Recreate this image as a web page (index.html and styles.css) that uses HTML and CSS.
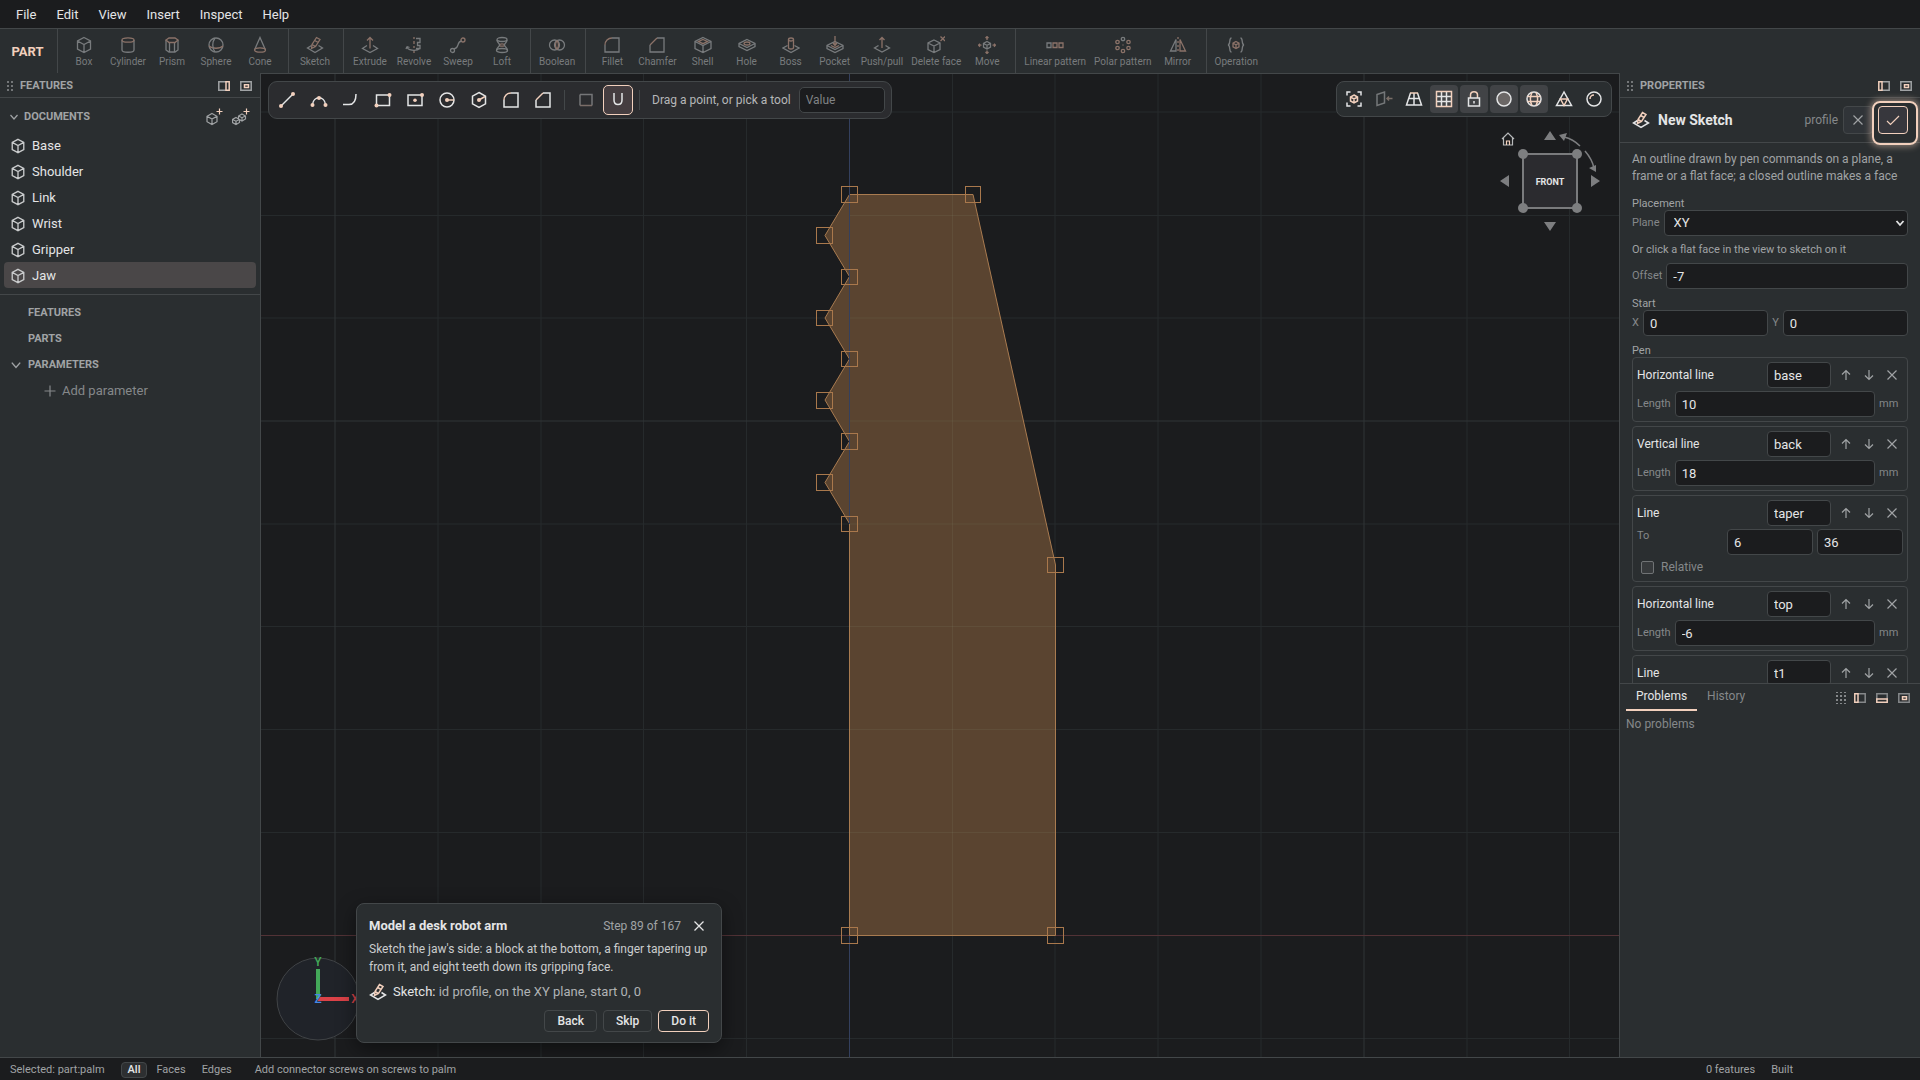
FILE: index.html
```html
<!DOCTYPE html>
<html lang="en">
<head>
<meta charset="utf-8">
<title>Jaw - Part</title>
<link rel="stylesheet" href="styles.css">
</head>
<body>
<svg class="defs" aria-hidden="true">
  <symbol id="box" viewBox="0 0 18 18"><path d="M9 1.500 15.500 5v8L9 16.500 2.500 13V5zM2.500 5 9 8.500 15.500 5M9 8.500V16.500"/></symbol>
  <symbol id="cylinder" viewBox="0 0 18 18"><path d="M3 4v10c0 3 12 3 12 0V4"/><ellipse class="hi" cx="9" cy="4" rx="6" ry="2.200"/></symbol>
  <symbol id="prism" viewBox="0 0 18 18"><path d="M3 4v10l3 2h6l3-2V4M6.500 6.500V16M11.500 6.500V16"/><path class="hi" d="M3 4l3-2h6l3 2-3 2.500H6z"/></symbol>
  <symbol id="sphere" viewBox="0 0 18 18"><circle cx="9" cy="9" r="7"/><path class="hi" d="M2 10c3 3 11 3 14 0"/><path d="M8 2c-3 4-3 10 0 14"/></symbol>
  <symbol id="cone" viewBox="0 0 18 18"><path d="M3.500 14 9 1.500 14.500 14"/><ellipse class="hi" cx="9" cy="14" rx="5.500" ry="2.200"/></symbol>
  <symbol id="sketch" viewBox="0 0 18 18"><path d="M5.500 9.500 1.500 12 9 16.500l7.500-4.500-4-2.500"/><path class="hi" d="M5.500 12.500 6 8.500 10.500 1.500l3.500 2-4.500 7zM6 8.500l3.500 2M8.700 4.500l3.500 2"/></symbol>
  <symbol id="extrude" viewBox="0 0 18 18"><path d="M6 9.500 1.500 12.500 9 16.500l7.500-4L12 9.500"/><path class="hi" d="M9 12.500V1.500M6 4.500l3-3 3 3"/></symbol>
  <symbol id="revolve" viewBox="0 0 18 18"><path class="hi" d="M9 1v2M9 5v3M9 10v2M9 14v3"/><path d="M11 2.500h4v4h-2.500v3H15v3h-4M2 10.500c0 4 9 5 13 2M2 10.500l-1 2.500M2 10.500l2.500 1"/></symbol>
  <symbol id="sweep" viewBox="0 0 18 18"><circle cx="3.500" cy="14.500" r="2"/><circle class="hi" cx="14" cy="4" r="2"/><path d="M5 13c6-1 2-7 7.500-8"/></symbol>
  <symbol id="loft" viewBox="0 0 18 18"><ellipse cx="9" cy="3.500" rx="5" ry="2"/><ellipse class="hi" cx="9" cy="9" rx="2.500" ry="1.200"/><path d="M4 4c0 3 2.500 3 2.500 5S3.500 11 3.500 14.500M14 4c0 3-2.500 3-2.500 5s3 2 3 5.500"/><ellipse cx="9" cy="14.500" rx="5.500" ry="2"/></symbol>
  <symbol id="boolean" viewBox="0 0 18 18"><circle cx="6.500" cy="9" r="5"/><circle cx="11.500" cy="9" r="5"/><path class="hi" d="M9 4.800c-2 2-2 6.400 0 8.400 2-2 2-6.400 0-8.400z"/></symbol>
  <symbol id="fillet" viewBox="0 0 18 18"><path d="M9 2h7v14H2V9"/><path class="hi" d="M2 9c0-4 3-7 7-7"/></symbol>
  <symbol id="chamfer" viewBox="0 0 18 18"><path d="M9 2h7v14H2V9"/><path class="hi" d="m2 9 7-7"/></symbol>
  <symbol id="shell" viewBox="0 0 18 18"><path d="M9 1.500 17 5.500v7L9 16.500l-8-4v-7zM1 5.500l8 4 8-4M9 9.500v7"/><path class="hi" d="m9 3.500 4.500 2L9 7.700 4.500 5.500z"/></symbol>
  <symbol id="hole" viewBox="0 0 18 18"><path d="m9 3.500 8 4v3l-8 4-8-4v-3zM1 7.500l8 4 8-4"/><ellipse class="hi" cx="9" cy="7.500" rx="3" ry="1.500"/></symbol>
  <symbol id="boss" viewBox="0 0 18 18"><path d="M5.500 9.500 1 12l8 4.500 8-4.500-4.500-2.500"/><path class="hi" d="M6.500 3.500v8c0 2 5 2 5 0v-8"/><ellipse class="hi" cx="9" cy="3.500" rx="2.500" ry="1.500"/></symbol>
  <symbol id="pocket" viewBox="0 0 18 18"><path d="m9 5.500 8 4v3l-8 4-8-4v-3zM1 9.500l8 4 8-4"/><path class="hi" d="M9 0v9M7 7l2 2.500L11 7M5 9.500l4 2 4-2"/></symbol>
  <symbol id="pushpull" viewBox="0 0 18 18"><path d="M5.500 9.500 1.500 12 9 16l7.500-4-4-2.500"/><path class="hi" d="M9 12V1.500M6.500 4 9 1.500 11.500 4"/></symbol>
  <symbol id="delface" viewBox="0 0 18 18"><path d="m7 4 6 3v6.500l-6 3-6-3V7zM1 7l6 3 6-3M7 10v6.500"/><path class="hi" d="m13.500.5 4.500 4.500M18 .5 13.500 5"/></symbol>
  <symbol id="move" viewBox="0 0 18 18"><path d="m9 5.500 3.500 2v3.500L9 13l-3.500-2V7.500zM5.500 7.500 9 9.300l3.500-1.800M9 9.300V13"/><path class="hi" d="M9 4V.8M7.500 2 9 .6 10.500 2M9 14.500v3M7.500 16 9 17.500l1.500-1.500M3.500 9.200H.6M2 7.700.5 9.200 2 10.700M14.500 9.200h3M16 7.700l1.500 1.500-1.500 1.500"/></symbol>
  <symbol id="linear" viewBox="0 0 18 18"><path d="M1 7h4v4.500H1z"/><path class="hi" d="M7 7h4v4.500H7zM13 7h4v4.500h-4z"/></symbol>
  <symbol id="polar" viewBox="0 0 18 18"><circle cx="9" cy="3" r="1.700"/><g class="hi"><circle cx="14.500" cy="6" r="1.700"/><circle cx="14.500" cy="12" r="1.700"/><circle cx="9" cy="15" r="1.700"/><circle cx="3.500" cy="12" r="1.700"/><circle cx="3.500" cy="6" r="1.700"/><path d="M9 8.500v1"/></g></symbol>
  <symbol id="mirror" viewBox="0 0 18 18"><path d="M7 3.500V15H1.500z"/><path class="hi" d="M11 3.500V15h5.500zM9 1v2M9 5v2M9 9v2M9 13v2"/></symbol>
  <symbol id="operation" viewBox="0 0 18 18"><path d="M4.500 2C1.500 2 4 8.500 1 9c3 .5.500 7 3.500 7M13.500 2c3 0 .5 6.500 3.500 7-3 .5-.5 7-3.500 7"/><path class="hi" d="m9 5.500 3 1.700v3.600l-3 1.700-3-1.700V7.200zM6 7.200l3 1.600 3-1.600M9 9v3.500"/></symbol>
  <symbol id="line" viewBox="0 0 18 18"><path d="M3 15 15 3"/><g class="dot"><circle cx="3" cy="15" r="2"/><circle cx="15" cy="3" r="2"/></g></symbol>
  <symbol id="arc" viewBox="0 0 18 18"><path d="M2.500 13.500c1-9 12-9 13 0"/><g class="dot"><circle cx="2.500" cy="14" r="2"/><circle cx="15.500" cy="14" r="2"/><circle cx="9" cy="7" r="2"/></g></symbol>
  <symbol id="tangent" viewBox="0 0 18 18"><path d="M1 13.500h6c5 0 7-4 7-10.500"/></symbol>
  <symbol id="rect" viewBox="0 0 18 18"><path d="M2.500 4h13v10.500h-13z"/><g class="dot"><circle cx="2.500" cy="14.500" r="2"/><circle cx="15.500" cy="4" r="2"/></g></symbol>
  <symbol id="crect" viewBox="0 0 18 18"><path d="M2 4h14v10.500H2z"/><g class="dot"><circle cx="9" cy="9.200" r="1.800"/><circle cx="16" cy="4" r="2"/></g></symbol>
  <symbol id="circle" viewBox="0 0 18 18"><circle cx="9" cy="9" r="7"/><path class="hi" d="M9 9h7"/><circle class="dot" cx="9" cy="9" r="2"/></symbol>
  <symbol id="polygon" viewBox="0 0 18 18"><path d="m9 1.500 6.500 3.700v7.600L9 16.500l-6.500-3.700V5.200z"/><path class="hi" d="m9 9 6-3.500"/><circle class="dot" cx="9" cy="9" r="2"/></symbol>
  <symbol id="square" viewBox="0 0 18 18"><path d="M3 3.500h12v11"/><path d="M3 3.500v11"/><path class="hi" d="M3 14.500h12"/></symbol>
  <symbol id="snap" viewBox="0 0 18 18"><path d="M5 2v7c0 6 8 6 8 0V2"/></symbol>
  <symbol id="fit" viewBox="0 0 18 18"><path d="M2 5.500V2h3.500M12.500 2H16v3.500M16 12.500V16h-3.500M5.500 16H2v-3.500"/><path class="hi" d="m9 5 3.500 2v4L9 13l-3.500-2V7zM5.500 7 9 9l3.500-2M9 9v4"/></symbol>
  <symbol id="section" viewBox="0 0 18 18"><path d="M2 4.500 9.500 2v11L2 15.500z"/><path class="hi" d="M17.500 8.500H12M14 6.500l-2 2 2 2"/></symbol>
  <symbol id="persp" viewBox="0 0 18 18"><path d="M5.500 3 1.500 15h15l-4-12M4 8.500h10M9 3v12"/><path class="hi" d="M5 3h8"/></symbol>
  <symbol id="grid" viewBox="0 0 18 18"><path d="M6.500 1.500v15M11.500 1.500v15M1.500 6.500h15M1.500 11.500h15"/><path class="hi" d="M1.500 1.500h15v15h-15z"/></symbol>
  <symbol id="lock" viewBox="0 0 18 18"><path class="hi" d="M5.500 8V5c0-4.500 7-4.500 7 0v3"/><path d="M3.500 8h11v8h-11zM9 11v2.500"/></symbol>
  <symbol id="shaded" viewBox="0 0 18 18"><circle class="fill" cx="9" cy="9" r="7"/></symbol>
  <symbol id="globe" viewBox="0 0 18 18"><circle cx="9" cy="9" r="7"/><path class="hi" d="M2.500 6.500h13M2.500 11.500h13M7 2.500c-2 4-2 9 0 13M11 2.500c2 4 2 9 0 13"/></symbol>
  <symbol id="mesh" viewBox="0 0 18 18"><path d="M9 2 1.500 15.500h15z"/><path class="hi" d="M5.500 9h7L9 15.500z"/></symbol>
  <symbol id="ball" viewBox="0 0 18 18"><circle cx="9" cy="9" r="7"/><path class="hi" d="M5 9c0-2 1.500-4 4-4"/></symbol>
  <symbol id="x" viewBox="0 0 12 12"><path d="m1.500 1.500 9 9M10.500 1.500l-9 9"/></symbol>
  <symbol id="check" viewBox="0 0 14 14"><path class="hi" d="m1 8 3.500 3.500L13 3"/></symbol>
  <symbol id="up" viewBox="0 0 12 12"><path d="M6 11V1.500M2 5.500l4-4 4 4"/></symbol>
  <symbol id="down" viewBox="0 0 12 12"><path d="M6 1v9.500M2 6.500l4 4 4-4"/></symbol>
  <symbol id="chev" viewBox="0 0 10 10"><path d="m1.500 3 3.500 4 3.500-4"/></symbol>
  <symbol id="plus" viewBox="0 0 12 12"><path d="M6 .5v11M.5 6h11"/></symbol>
  <symbol id="grip" viewBox="0 0 8 12"><path class="pts" d="M1 1h2v2H1zM5 1h2v2H5zM1 5h2v2H1zM5 5h2v2H5zM1 9h2v2H1zM5 9h2v2H5z"/></symbol>
  <symbol id="grip4" viewBox="0 0 10 14"><path class="pts" d="M0 1h2v1H0zM4 1h2v1H4zM8 1h2v1H8zM0 4h2v2H0zM4 4h2v2H4zM8 4h2v2H8zM0 8h2v2H0zM4 8h2v2H4zM8 8h2v2H8zM0 12h2v1H0zM4 12h2v1H4zM8 12h2v1H8z"/></symbol>
  <symbol id="dockr" viewBox="0 0 12 10"><path d="M8 .8H.8v8.400H8"/><path class="hi" d="M8 .8h3.200v8.400H8z"/></symbol>
  <symbol id="dockl" viewBox="0 0 12 10"><path d="M4 .8h7.200v8.400H4"/><path class="hi" d="M4 .8H.8v8.400H4z"/></symbol>
  <symbol id="dockb" viewBox="0 0 12 10"><path d="M.8 6V.8h10.400V6"/><path class="hi" d="M.8 6h10.400v3.200H.8z"/></symbol>
  <symbol id="float" viewBox="0 0 12 10"><path d="M.8.8h10.400v8.400H.8z"/><path class="hi" d="M4.500 3.800h4v2.700h-4z"/></symbol>
  <symbol id="addpart" viewBox="0 0 18 18"><path d="m6 5.500 5 2.800v5.400l-5 2.800-5-2.800V8.300zM1 8.300l5 2.700 5-2.700M6 11v5.500"/><path class="hi" d="M13.500.5v6M10.500 3.500h6"/></symbol>
  <symbol id="addasm" viewBox="0 0 18 18"><path d="m4 9.500 3.500 2v3L4 16.500.5 14.500v-3zM.5 11.500 4 13.200l3.500-1.700M4 13.200v3M10 6l3.500 2v3L10 13l-3.500-2V8zM6.500 8 10 9.700 13.500 8M10 9.700V13"/><path class="hi" d="M14.500.5v6M11.500 3.500h6"/></symbol>
  <symbol id="home" viewBox="0 0 14 14"><path d="M1 7 7 1l6 6M2.500 6v7h9V6"/><path class="hi" d="M5.500 13V9h3v4"/></symbol>
</svg>

<nav class="menubar" aria-label="Main menu">
  <button>File</button><button>Edit</button><button>View</button><button>Insert</button><button>Inspect</button><button>Help</button>
</nav>

<header class="ribbon">
  <div class="mode">PART</div>
  <div class="group">
    <button><svg><use href="#box"/></svg>Box</button>
    <button><svg><use href="#cylinder"/></svg>Cylinder</button>
    <button><svg><use href="#prism"/></svg>Prism</button>
    <button><svg><use href="#sphere"/></svg>Sphere</button>
    <button><svg><use href="#cone"/></svg>Cone</button>
  </div>
  <div class="group"><button><svg><use href="#sketch"/></svg>Sketch</button></div>
  <div class="group">
    <button><svg><use href="#extrude"/></svg>Extrude</button>
    <button><svg><use href="#revolve"/></svg>Revolve</button>
    <button><svg><use href="#sweep"/></svg>Sweep</button>
    <button><svg><use href="#loft"/></svg>Loft</button>
  </div>
  <div class="group"><button><svg><use href="#boolean"/></svg>Boolean</button></div>
  <div class="group">
    <button><svg><use href="#fillet"/></svg>Fillet</button>
    <button><svg><use href="#chamfer"/></svg>Chamfer</button>
    <button><svg><use href="#shell"/></svg>Shell</button>
    <button><svg><use href="#hole"/></svg>Hole</button>
    <button><svg><use href="#boss"/></svg>Boss</button>
    <button><svg><use href="#pocket"/></svg>Pocket</button>
    <button><svg><use href="#pushpull"/></svg>Push/pull</button>
    <button><svg><use href="#delface"/></svg>Delete face</button>
    <button><svg><use href="#move"/></svg>Move</button>
  </div>
  <div class="group">
    <button><svg><use href="#linear"/></svg>Linear pattern</button>
    <button><svg><use href="#polar"/></svg>Polar pattern</button>
    <button><svg><use href="#mirror"/></svg>Mirror</button>
  </div>
  <div class="group"><button><svg><use href="#operation"/></svg>Operation</button></div>
</header>

<div class="work">
  <aside class="side left">
    <div class="panel-head">
      <svg class="grip"><use href="#grip"/></svg><h2>FEATURES</h2>
      <button class="dock" aria-label="Dock right"><svg><use href="#dockr"/></svg></button>
      <button class="dock" aria-label="Float"><svg><use href="#float"/></svg></button>
    </div>
    <div class="docs-head">
      <svg class="chev"><use href="#chev"/></svg><h2>DOCUMENTS</h2>
      <button aria-label="New part"><svg><use href="#addpart"/></svg></button>
      <button aria-label="New assembly"><svg><use href="#addasm"/></svg></button>
    </div>
    <div class="docs">
      <button><svg><use href="#box"/></svg>Base</button>
      <button><svg><use href="#box"/></svg>Shoulder</button>
      <button><svg><use href="#box"/></svg>Link</button>
      <button><svg><use href="#box"/></svg>Wrist</button>
      <button><svg><use href="#box"/></svg>Gripper</button>
      <button class="on"><svg><use href="#box"/></svg>Jaw</button>
    </div>
    <div class="tree">
      <h3>FEATURES</h3>
      <h3>PARTS</h3>
      <h3><svg><use href="#chev"/></svg>PARAMETERS</h3>
      <button><svg><use href="#plus"/></svg>Add parameter</button>
    </div>
  </aside>

  <main class="view">
    <svg class="canvas" viewBox="261 74 1358 983" preserveAspectRatio="xMinYMin slice">
      <path class="minor" d="M438 74v983M541 74v983M643.500 74v983M746.500 74v983M952.500 74v983M1055 74v983M1158 74v983M1261 74v983M1467 74v983M1569.500 74v983M261 112h1358M261 215.500h1358M261 318h1358M261 524h1358M261 626.500h1358M261 729.500h1358M261 832.500h1358M261 1038.500h1358"/>
      <path class="major" d="M335 74v983M1364 74v983M261 421h1358"/>
      <path class="axis-x" d="M261 935.500h1358"/>
      <path class="face" d="M849.500 935.500h206V565L973 194.500H849.500L825 235.500l24.500 41L825 318l24.500 41L825 400l24.500 41.500L825 482.500l24.500 41z"/>
      <path class="inner" d="M952.500 195v740M849 215.500h128M849 318h151M849 421h173M849 524h196M849 626.500h206M849 729.500h206M849 832.500h206"/>
      <path class="axis-y" d="M849.500 74v450M849.500 936v121"/>
      <g class="handles">
        <rect x="841.500" y="186.500" width="16" height="16"/><rect x="965.500" y="186.500" width="15" height="16"/>
        <rect x="816.500" y="227.500" width="16" height="16"/><rect x="841.500" y="269.500" width="16" height="15"/>
        <rect x="816.500" y="310.500" width="16" height="15"/><rect x="841.500" y="351.500" width="16" height="15"/>
        <rect x="816.500" y="392.500" width="16" height="16"/><rect x="841.500" y="433.500" width="16" height="16"/>
        <rect x="816.500" y="474.500" width="16" height="16"/><rect x="841.500" y="516.500" width="16" height="15"/>
        <rect x="1047.500" y="557.500" width="16" height="15"/><rect x="841.500" y="927.500" width="16" height="16"/>
        <rect x="1047.500" y="927.500" width="16" height="16"/>
      </g>
    </svg>

    <div class="sketchbar">
      <button aria-label="Line"><svg><use href="#line"/></svg></button>
      <button aria-label="Arc"><svg><use href="#arc"/></svg></button>
      <button aria-label="Tangent arc"><svg><use href="#tangent"/></svg></button>
      <button aria-label="Rectangle"><svg><use href="#rect"/></svg></button>
      <button aria-label="Centre rectangle"><svg><use href="#crect"/></svg></button>
      <button aria-label="Circle"><svg><use href="#circle"/></svg></button>
      <button aria-label="Polygon"><svg><use href="#polygon"/></svg></button>
      <button aria-label="Fillet"><svg><use href="#fillet"/></svg></button>
      <button aria-label="Chamfer"><svg><use href="#chamfer"/></svg></button>
      <i></i>
      <button class="dim" aria-label="Construction"><svg><use href="#square"/></svg></button>
      <button class="on" aria-label="Snap"><svg><use href="#snap"/></svg></button>
      <i></i>
      <label for="value">Drag a point, or pick a tool</label>
      <input id="value" placeholder="Value">
    </div>

    <div class="viewbar">
      <button aria-label="Fit"><svg><use href="#fit"/></svg></button>
      <button class="dim" aria-label="Section"><svg><use href="#section"/></svg></button>
      <button aria-label="Perspective"><svg><use href="#persp"/></svg></button>
      <button class="on" aria-label="Grid"><svg><use href="#grid"/></svg></button>
      <button class="on" aria-label="Lock"><svg><use href="#lock"/></svg></button>
      <button class="on" aria-label="Shaded"><svg><use href="#shaded"/></svg></button>
      <button class="on" aria-label="Edges"><svg><use href="#globe"/></svg></button>
      <button aria-label="Mesh"><svg><use href="#mesh"/></svg></button>
      <button aria-label="Material"><svg><use href="#ball"/></svg></button>
    </div>

    <svg class="cube" viewBox="0 0 104 106">
      <rect class="cube-face" x="24" y="24" width="54" height="54"/>
      <g class="cube-part"><circle cx="24" cy="24" r="5"/><circle cx="78" cy="24" r="5"/><circle cx="24" cy="78" r="5"/><circle cx="78" cy="78" r="5"/>
      <path d="m51 1 6 9H45zM51 101l6-9H45zM1 51l9-6v12zM101 51l-9-6v12z"/></g>
      <path class="cube-arc" d="M65 7q9 2 16 9M86 21q7 8 9 17"/>
      <path class="cube-part" d="m60 5 8-2-3 8zM97 42l-7-4 7-3z"/>
      <text x="51" y="55">FRONT</text>
      <svg class="cube-home" x="2" y="2"><use href="#home"/></svg>
    </svg>

    <svg class="triad" viewBox="0 0 88 100">
      <circle cx="42" cy="54" r="41"/>
      <path class="tg" d="M42 54V24"/><path class="tr" d="M42 54h31"/>
      <text class="g" x="42" y="21">Y</text><text class="r" x="79" y="58">X</text><text class="b" x="42" y="58">Z</text>
    </svg>

    <section class="tour">
      <div class="tour-head"><h2>Model a desk robot arm</h2><span>Step 89 of 167</span><button aria-label="Close"><svg><use href="#x"/></svg></button></div>
      <p>Sketch the jaw's side: a block at the bottom, a finger tapering up from it, and eight teeth down its gripping face.</p>
      <div class="hint"><svg><use href="#sketch"/></svg><span><b>Sketch:</b> id profile, on the XY plane, start 0, 0</span></div>
      <div class="actions"><button>Back</button><button>Skip</button><button class="go">Do it</button></div>
    </section>
  </main>

  <aside class="side right">
    <div class="panel-head">
      <svg class="grip"><use href="#grip"/></svg><h2>PROPERTIES</h2>
      <button class="dock" aria-label="Dock left"><svg><use href="#dockl"/></svg></button>
      <button class="dock" aria-label="Float"><svg><use href="#float"/></svg></button>
    </div>
    <div class="title">
      <svg><use href="#sketch"/></svg><h1>New Sketch</h1><span>profile</span>
      <button class="cancel" aria-label="Cancel"><svg><use href="#x"/></svg></button>
      <button class="ok" aria-label="Accept"><svg><use href="#check"/></svg></button>
    </div>
    <form class="props">
      <p class="about">An outline drawn by pen commands on a plane, a frame or a flat face; a closed outline makes a face</p>
      <h4>Placement</h4>
      <div class="row"><label for="plane">Plane</label><div class="pick"><select id="plane"><option>XY</option></select><svg><use href="#chev"/></svg></div></div>
      <p class="note">Or click a flat face in the view to sketch on it</p>
      <div class="row"><label for="offset">Offset</label><input id="offset" value="-7"></div>
      <h4 class="tight">Start</h4>
      <div class="row"><label for="sx">X</label><input id="sx" value="0"><label for="sy">Y</label><input id="sy" value="0"></div>
      <h4 class="tight">Pen</h4>
      <div class="card">
        <div class="row name"><label for="n1">Horizontal line</label><input id="n1" value="base"><button type="button" aria-label="Move up"><svg><use href="#up"/></svg></button><button type="button" aria-label="Move down"><svg><use href="#down"/></svg></button><button type="button" aria-label="Remove"><svg><use href="#x"/></svg></button></div>
        <div class="row len"><label for="l1">Length</label><input id="l1" value="10"><span>mm</span></div>
      </div>
      <div class="card">
        <div class="row name"><label for="n2">Vertical line</label><input id="n2" value="back"><button type="button" aria-label="Move up"><svg><use href="#up"/></svg></button><button type="button" aria-label="Move down"><svg><use href="#down"/></svg></button><button type="button" aria-label="Remove"><svg><use href="#x"/></svg></button></div>
        <div class="row len"><label for="l2">Length</label><input id="l2" value="18"><span>mm</span></div>
      </div>
      <div class="card">
        <div class="row name"><label for="n3">Line</label><input id="n3" value="taper"><button type="button" aria-label="Move up"><svg><use href="#up"/></svg></button><button type="button" aria-label="Move down"><svg><use href="#down"/></svg></button><button type="button" aria-label="Remove"><svg><use href="#x"/></svg></button></div>
        <div class="row to"><label for="tx">To</label><input id="tx" value="6"><input aria-label="To Y" value="36"></div>
        <label class="tick"><input type="checkbox">Relative</label>
      </div>
      <div class="card">
        <div class="row name"><label for="n4">Horizontal line</label><input id="n4" value="top"><button type="button" aria-label="Move up"><svg><use href="#up"/></svg></button><button type="button" aria-label="Move down"><svg><use href="#down"/></svg></button><button type="button" aria-label="Remove"><svg><use href="#x"/></svg></button></div>
        <div class="row len"><label for="l4">Length</label><input id="l4" value="-6"><span>mm</span></div>
      </div>
      <div class="card">
        <div class="row name"><label for="n5">Line</label><input id="n5" value="t1"><button type="button" aria-label="Move up"><svg><use href="#up"/></svg></button><button type="button" aria-label="Move down"><svg><use href="#down"/></svg></button><button type="button" aria-label="Remove"><svg><use href="#x"/></svg></button></div>
      </div>
    </form>
    <section class="problems">
      <div class="tabs">
        <button class="on">Problems</button><button>History</button>
        <svg class="grip4"><use href="#grip4"/></svg>
        <button class="dock" aria-label="Dock left"><svg><use href="#dockl"/></svg></button>
        <button class="dock" aria-label="Dock bottom"><svg><use href="#dockb"/></svg></button>
        <button class="dock" aria-label="Float"><svg><use href="#float"/></svg></button>
      </div>
      <p>No problems</p>
    </section>
  </aside>
</div>

<footer class="status">
  <span class="sel">Selected: part:palm</span>
  <button class="on">All</button><button>Faces</button><button>Edges</button>
  <span class="msg">Add connector screws on screws to palm</span>
  <span class="count">0 features</span><span class="built">Built</span>
</footer>
</body>
</html>
```
FILE: styles.css
```css
:root {
  --dark: #1b1c1e;
  --panel: #2a2e30;
  --line: #434749;
  --text: #e4e5e6;
  --muted: #a0a3a5;
  --faint: #85888a;
  --accent: #f2d0bd;
}
* { box-sizing: border-box; margin: 0; }
body {
  display: flex; flex-direction: column; height: 100vh; overflow: hidden;
  background: var(--dark); color: var(--text);
  font: 13px/18px Roboto, "Liberation Sans", sans-serif;
}
button, input, select { font: inherit; color: inherit; background: none; border: 0; padding: 0; }
button { display: flex; align-items: center; justify-content: center; }
svg { width: 18px; height: 18px; fill: none; stroke: currentColor; stroke-width: 1.5; flex: none; }
.defs { position: absolute; width: 0; height: 0; }
.hi { stroke: var(--accent); }
.dot { fill: var(--accent); stroke: none; }
.pts { fill: currentColor; stroke: none; }
.fill { fill: #6b6766; }
h1, h2, h3, h4 { font-size: 12px; font-weight: 500; }

.menubar { display: flex; gap: 4px; height: 28px; padding: 2px 8px 0; }
.menubar button { padding: 0 8px; }

.ribbon { display: flex; height: 45px; background: var(--panel); border-top: 1px solid var(--line); color: #787b7d; --accent: #8b7268; }
.mode { width: 58px; display: flex; align-items: center; justify-content: center; padding: 2px 2px 0 0; border-right: 1px solid var(--line); color: #f2d0bd; font-weight: 700; }
.group { display: flex; padding: 3px 6px 0 4px; border-right: 1px solid var(--line); }
.group:last-child { border: 0; }
.group button { flex-direction: column; min-width: 44px; padding: 0 4px; font-size: 10px; line-height: 16px; }
.group svg { stroke-width: 1.300; }

.work { display: flex; flex: 1; min-height: 0; }
.side { background: var(--panel); flex: none; display: flex; flex-direction: column; }
.left { width: 260px; }
.right { width: 301px; border-left: 1px solid var(--line); }
.panel-head { display: flex; align-items: center; height: 25px; padding: 1px 8px 0 6px; border-bottom: 1px solid var(--line); gap: 6px; color: var(--muted); flex: none; }
.panel-head h2 { flex: 1; font-size: 11px; font-weight: 700; }
.grip { width: 8px; height: 12px; color: #737678; }
.dock { margin-left: 4px; }
.dock svg { width: 12px; height: 10px; }
.docs-head { display: flex; align-items: center; height: 34px; padding: 3px 10px 0 9px; gap: 5px; color: var(--muted); }
.docs-head h2 { flex: 1; font-size: 11px; font-weight: 700; }
.docs-head button { margin-left: 3px; }
.docs-head svg, .tree svg { stroke-width: 1.200; }
.docs-head .chev { width: 10px; height: 10px; }
.docs { padding: 0 4px 6px; border-bottom: 1px solid var(--line); }
.docs button { display: flex; justify-content: flex-start; width: 100%; height: 26px; padding: 1px 0 0 6px; gap: 6px; border-radius: 4px; }
.docs svg { width: 16px; height: 16px; color: #c9cbcc; }
.docs .on { background: #4a4748; }
.tree { padding: 5px 10px; color: var(--muted); }
.tree h3 { display: flex; align-items: center; height: 26px; padding-left: 18px; font-size: 11px; font-weight: 700; }
.tree h3 svg { width: 12px; height: 12px; margin: 0 6px 0 -18px; }
.tree button { height: 26px; margin-left: 34px; gap: 6px; color: var(--faint); }
.tree button svg { width: 12px; height: 12px; }

.view { flex: 1; min-width: 0; position: relative; overflow: hidden; border-top: 1px solid var(--line); border-left: 1px solid var(--line); }
.canvas { display: block; width: 100%; height: 100%; stroke-width: 1; }
.minor { stroke: #262a2c; }
.major { stroke: #303436; }
.axis-x { stroke: #523236; }
.axis-y { stroke: #34405e; }
.face { fill: #5a4430; stroke: #a97b50; }
.inner { stroke: #8c9a7a; stroke-opacity: .12; }
.handles { stroke: #a9784c; }

.sketchbar, .viewbar { position: absolute; top: 7px; display: flex; align-items: center; gap: 2px; padding: 3px; border: 1px solid var(--line); border-radius: 9px; background: #2b2c2f; }
.sketchbar { left: 7px; padding-right: 6px; }
.sketchbar button { width: 30px; height: 30px; border-radius: 5px; border: 1px solid transparent; }
.sketchbar .on { border-color: var(--accent); background: #453d40; }
.sketchbar i { width: 1px; height: 20px; background: var(--line); margin: 0 4px; }
.sketchbar label { font-size: 12px; color: #b5b7b8; margin: 0 6px; }
.sketchbar input { width: 86px; height: 26px; padding: 0 6px; font-size: 12px; border: 1px solid var(--line); border-radius: 5px; background: var(--dark); }
.sketchbar input::placeholder { color: #808385; }
.dim { opacity: .4; }
.viewbar { right: 7px; background: var(--panel); border-radius: 8px; }
.viewbar button { width: 28px; height: 28px; border-radius: 4px; }
.viewbar .on { background: #414346; }

.cube { position: absolute; right: 16px; top: 56px; width: 104px; height: 106px; color: #b8babb; }
.cube-home { width: 14px; height: 14px; stroke-width: 1.200; }
.cube-face { fill: #2b2b2f; stroke: #7a7b7d; stroke-width: 2; }
.cube-part { fill: #7d7e80; stroke: none; }
.cube-arc { stroke: #7d7e80; }
.cube text { fill: #e4e5e6; stroke: none; font-size: 9px; font-weight: 700; text-anchor: middle; }

.triad { position: absolute; left: 15px; bottom: 12px; width: 88px; height: 100px; }
.triad circle { fill: #202329; stroke: #404346; stroke-width: 1; }
.triad text { stroke: none; font-size: 12px; font-weight: 500; text-anchor: middle; }
.tg { stroke: #43a859; stroke-width: 4; }
.tr { stroke: #dc4248; stroke-width: 4; }
.triad .g { fill: #43a859; }
.triad .r { fill: #dc4248; }
.triad .b { fill: #4588e6; }

.tour { position: absolute; left: 95px; bottom: 14px; width: 366px; padding: 10px 12px; border: 1px solid var(--line); border-radius: 8px; background: var(--panel); box-shadow: 0 6px 20px rgba(0, 0, 0, .45); }
.tour-head { display: flex; align-items: center; height: 22px; padding: 2px 0 0; }
.tour-head h2 { flex: 1; font-size: 13px; font-weight: 700; }
.tour-head span { font-size: 12px; color: var(--muted); }
.tour-head button { width: 20px; height: 20px; margin-left: 8px; }
.tour-head svg { width: 12px; height: 12px; stroke-width: 1.300; }
.tour p { margin-top: 4px; font-size: 12px; color: #cbcdce; }
.hint { display: flex; align-items: center; gap: 6px; height: 24px; margin-top: 4px; color: #b0b3b5; }
.hint svg, .hint b { color: var(--text); font-weight: 400; }
.actions { display: flex; justify-content: flex-end; gap: 6px; margin-top: 6px; }
.actions button { height: 22px; padding: 0 12px; border: 1px solid var(--line); border-radius: 4px; font-size: 12px; font-weight: 500; }
.actions .go { border-color: var(--accent); }

.title { position: relative; display: flex; align-items: center; height: 45px; padding: 0 12px; border-bottom: 1px solid var(--line); flex: none; }
.title h1 { flex: 1; margin-left: 8px; font-size: 14px; font-weight: 700; }
.title span { font-size: 12px; color: var(--faint); margin-right: 5px; }
.title button { width: 30px; height: 28px; border: 1px solid var(--line); border-radius: 4px; background: #303438; }
.title button svg { width: 12px; height: 12px; stroke-width: 1.200; color: var(--muted); }
.title .ok { margin-left: 5px; border-color: var(--accent); background: #37373d; }
.title .ok svg { width: 14px; height: 14px; }
.title::after { content: ""; position: absolute; z-index: 1; right: 2px; top: 3px; width: 42px; height: 40px; border: 2px solid var(--accent); border-radius: 8px; box-shadow: 0 0 6px 2px rgba(242, 208, 189, .45); }

.props { flex: 0 0 540px; overflow: hidden; padding: 8px 12px 0; color: var(--muted); font-size: 11px; line-height: 14px; }
.about { font-size: 12px; line-height: 17px; }
.props h4 { padding-top: 12px; font-size: 11px; font-weight: 400; line-height: 13px; }
.note { margin: 7px 0 6px; }
.props .tight { padding-top: 8px; }
.row { display: flex; align-items: center; gap: 4px; }
.row label, .row span { color: var(--faint); }
.row input, .row select { flex: 1; width: 0; height: 26px; padding: 0 6px; border: 1px solid var(--line); border-radius: 4px; background: var(--dark); color: var(--text); font-size: 13px; }
.pick { flex: 1; display: grid; align-items: center; }
.row select { grid-area: 1 / 1; width: 100%; padding: 0 9px; appearance: none; }
.pick svg { grid-area: 1 / 1; justify-self: end; width: 10px; height: 10px; margin-right: 3px; color: var(--text); stroke-width: 1.800; pointer-events: none; }
.card { padding: 4px; margin-bottom: 4px; border: 1px solid var(--line); border-radius: 4px; }
.card .row + .row { margin-top: 3px; }
.row.name { gap: 0; }
.name label { flex: 1; font-size: 12px; color: var(--text); }
.name input { flex: none; width: 64px; margin-right: 3px; }
.name button { width: 23px; height: 24px; color: var(--muted); }
.name svg { width: 12px; height: 12px; stroke-width: 1.200; }
.len span { width: 24px; }
.to label { flex: 1; align-self: flex-start; }
.to input { flex: none; width: 86px; }
.tick { display: flex; align-items: center; gap: 7px; height: 22px; padding: 2px 0 0 4px; font-size: 12px; color: var(--faint); }
.tick input { appearance: none; width: 13px; height: 13px; border: 1px solid #707375; border-radius: 2px; background: #373a3c; }

.problems { flex: 1; border-top: 1px solid var(--line); padding: 0 6px; color: var(--faint); font-size: 12px; }
.tabs { display: flex; align-items: center; height: 27px; }
.tabs button:not(.dock) { height: 27px; padding: 0 10px 2px; border-bottom: 2px solid transparent; }
.tabs .on { color: var(--text); border-color: var(--accent) !important; }
.grip4 { width: 10px; height: 14px; margin-left: auto; }
.tabs .dock { margin-left: 10px; }
.tabs .grip4 + .dock { margin-left: 8px; }
.tabs .dock:last-child { margin-right: 4px; }
.problems p { margin-top: 4px; }

.status { display: flex; align-items: center; height: 23px; padding: 1px 10px 0; border-top: 1px solid var(--line); font-size: 11px; color: var(--muted); flex: none; }
.status button { height: 16px; padding: 0 6px; margin-right: 2px; border: 1px solid transparent; border-radius: 4px; }
.status .on { color: var(--text); border-color: var(--line); background: #2d2f31; font-weight: 500; }
.sel { margin-right: 16px; }
.msg { flex: 1; margin-left: 14px; }
.count { margin-right: 16px; }
.built { margin-right: 117px; }
```
